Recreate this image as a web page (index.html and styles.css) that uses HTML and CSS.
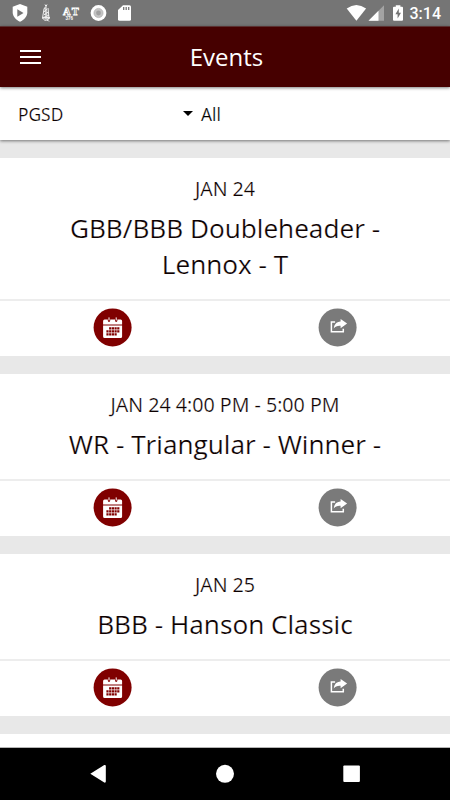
FILE: index.html
```html
<!DOCTYPE html>
<html lang="en">
<head>
  <meta charset="UTF-8" />
  <meta name="viewport" content="width=device-width, initial-scale=1" />
  <title>Events</title>
  <link rel="stylesheet" href="styles.css">
</head>
<body>

  <!-- Shared icons -->
  <svg class="sprite" width="0" height="0">
    <symbol id="calendar" viewBox="0 0 38 38">
      <path fill="#fff" d="M9.500 16V12.500q0-1.500 1.500-1.500h3.200v1.200q0 1.300 1.200 1.300t1.200-1.300V11h4.800v1.200q0 1.300 1.200 1.300t1.200-1.300V11H27q1.500 0 1.500 1.500V16zM9.500 17.200h19V28q0 1.500-1.500 1.500H11q-1.500 0-1.500-1.500z" />
      <path stroke="#fff" stroke-width="1" d="M15.400 9v3M22.600 9v3" />
      <g stroke="#800000" stroke-width="2.200" stroke-dasharray="2.200 .5">
        <path d="M15.500 20h10.400M12.800 23h13.100M12.800 26h10.400" />
      </g>
    </symbol>
    <symbol id="share" viewBox="0 0 38 38">
      <path fill="none" stroke="#fff" stroke-width="1.500" d="M16.500 13.700h-3.700v9.700h11.900v-3" />
      <path fill="#fff" d="M22 10.500l6.500 4.700-6.500 4.600v-2.400c-3.300-.2-5.300.6-6.800 2.800.3-4.100 2.400-6.800 6.800-7.100z" />
    </symbol>
  </svg>

  <div class="status-bar">
    <svg class="notifications" width="140" height="26" viewBox="0 0 140 26">
      <path fill="#fff" d="M20 4l7.300 2.700v5.600c0 4.200-3 7.600-7.300 9.500-4.300-1.900-7.300-5.300-7.300-9.500V6.700z" />
      <path fill="#757575" d="M17.300 9.300v7.400l6.200-3.700z" />
      <g fill="none" stroke="#eee" stroke-width="1">
        <path d="M45 4.500l1 2 1-2M46 6.500l-2 2 3 1-3 2 4 1-4 2 5 1-6 2 7 0-3 2 2 2M44 9l-1.500 9 3 3M48 8l1 10-2 3M42 18h8M46 7v14" />
      </g>
      <text class="logo-text" x="63" y="15">AT</text>
      <text class="logo-number" x="65.500" y="20">376</text>
      <circle cx="98.500" cy="13" r="7.900" fill="#fff" />
      <circle cx="98.500" cy="13" r="4.600" fill="#c4c4c4" stroke="#aaa" stroke-width=".6" />
      <circle cx="98.500" cy="13" r="2.400" fill="#a0a0a0" />
      <path fill="#fff" d="M123 5.200h6.500q1.500 0 1.500 1.500v12.500q0 1.600-1.500 1.600h-10q-1.500 0-1.500-1.600V10z" />
      <path stroke="#757575" stroke-width="1.300" d="M123.700 7v3M126.200 7v3M128.700 7v3" />
    </svg>
    <div class="system">
      <svg width="60" height="26" viewBox="345 0 60 26">
        <path fill="#fff" d="M346.700 8.500q9.700-7 19.400 0l-9.700 12.300z" />
        <path fill="#a3a3a3" d="M384 5.300v15.500h-15.500z" />
        <path fill="#fff" d="M378.500 10.800v10h-10z" />
        <path fill="#fff" d="M395.800 5.200h4.600v1.500h1.600q1 0 1 1v12q0 1.100-1 1.100h-8q-1 0-1-1.100v-12q0-1 1-1h1.800z" />
        <path fill="#757575" d="M398.800 8.500l-3.400 5.700h2.200v4.300l3.400-5.800h-2.200z" />
      </svg>
      <span class="clock">3:14</span>
    </div>
  </div>

  <header class="app-bar">
    <div class="menu"><i></i><i></i><i></i></div>
    <h1>Events</h1>
  </header>

  <div class="filters">
    <span class="school">PGSD</span>
    <span class="caret"></span>
    <span class="category">All</span>
  </div>

  <main class="events">
    <section class="card">
      <div class="info">
        <p class="date">JAN 24</p>
        <h2>GBB/BBB Doubleheader -<br>Lennox - T</h2>
      </div>
      <div class="actions">
        <span class="action add"><svg><use href="#calendar" /></svg></span>
        <span class="action share"><svg><use href="#share" /></svg></span>
      </div>
    </section>

    <section class="card">
      <div class="info">
        <p class="date">JAN 24 4:00 PM - 5:00 PM</p>
        <h2>WR - Triangular - Winner -</h2>
      </div>
      <div class="actions">
        <span class="action add"><svg><use href="#calendar" /></svg></span>
        <span class="action share"><svg><use href="#share" /></svg></span>
      </div>
    </section>

    <section class="card">
      <div class="info">
        <p class="date">JAN 25</p>
        <h2>BBB - Hanson Classic</h2>
      </div>
      <div class="actions">
        <span class="action add"><svg><use href="#calendar" /></svg></span>
        <span class="action share"><svg><use href="#share" /></svg></span>
      </div>
    </section>

    <section class="card next"></section>
  </main>

  <nav class="nav-bar">
    <svg width="450" height="52" viewBox="0 0 450 52" fill="#fff">
      <path d="M90.300 25.700L104.300 17q1.500-.5 1.500 1v15.500q0 1.500-1.500 1z" />
      <circle cx="225" cy="25.800" r="9" />
      <rect x="343.300" y="17.400" width="16.600" height="16.600" rx="1" />
    </svg>
  </nav>

</body>
</html>
```

FILE: styles.css
```css
* {
  margin: 0;
  padding: 0;
  box-sizing: border-box;
}
body {
  width: 450px;
  height: 800px;
  display: flex;
  flex-direction: column;
  overflow: hidden;
  background: #e8e8e8;
  color: #0c0000;
  font-family: "Open Sans", "Noto Sans", sans-serif;
}
svg {
  display: block;
}
.sprite {
  display: none;
}

/* Android status bar */
.status-bar {
  height: 26px;
  flex: none;
  display: flex;
  justify-content: space-between;
  background: #757575;
}
.system {
  display: flex;
  padding-right: 9px;
}
.clock {
  margin-left: 5px;
  color: #fff;
  font: 500 16px/28px Roboto, sans-serif;
}
.logo-text {
  font: bold 10.500px "Liberation Serif", serif;
  letter-spacing: 2px;
  fill: #666;
  stroke: #fff;
  stroke-width: .8px;
}
.logo-number {
  font: bold 4.500px "Liberation Sans", sans-serif;
  fill: #fff;
}

/* App header */
.app-bar {
  height: 61px;
  flex: none;
  display: grid;
  grid-template-columns: 60px 1fr 57px;
  align-items: center;
  padding-bottom: 1px;
  background: #460000;
  border-top: 1px solid #5a3030;
  color: #fff;
  box-shadow: 0 1px 3px rgba(0, 0, 0, .5);
  z-index: 1;
}
.menu {
  display: flex;
  flex-direction: column;
  gap: 4px;
  padding-left: 20px;
}
.menu i {
  width: 21px;
  height: 2px;
  background: #fff;
}
h1 {
  font-size: 24px;
  font-weight: 400;
  text-align: center;
}

/* Filter row */
.filters {
  height: 53px;
  flex: none;
  display: flex;
  align-items: center;
  padding: 0 18px;
  background: #fff;
  font-size: 17.400px;
  -webkit-text-stroke: .15px #fff;
  box-shadow: 0 1px 3px rgba(0, 0, 0, .5);
}
.school {
  width: 165px;
}
.caret {
  border: 5.500px solid transparent;
  border-top-color: #000;
  border-bottom: 0;
  margin-right: 8px;
}
.category {
  color: #000;
}

/* Event list */
.events {
  flex: 1;
  min-height: 0;
  display: flex;
  flex-direction: column;
  gap: 17.500px;
  padding-top: 17.500px;
  overflow: hidden;
}
.card {
  flex: none;
  background: #fff;
  text-align: center;
}
.info {
  padding: 17.500px 0 16.500px;
}
.date {
  font-size: 19.700px;
  -webkit-text-stroke: .2px #fff;
  line-height: 27px;
  margin-bottom: 8px;
}
h2 {
  font-size: 26.200px;
  font-weight: 400;
  -webkit-text-stroke: .2px #fff;
  line-height: 36px;
}
.actions {
  height: 57.500px;
  display: grid;
  grid-template-columns: 1fr 1fr;
  place-items: center;
  border-top: 2px solid #ededed;
}
.action {
  width: 38px;
  height: 38px;
  border-radius: 50%;
  transform: translate(-.4px, -.6px);
}
.action svg {
  width: 38px;
  height: 38px;
}
.add {
  background: #800000;
}
.share {
  background: #7a7a7a;
}
.next {
  height: 60px;
}

/* Android navigation bar */
.nav-bar {
  height: 53px;
  flex: none;
  background: #000;
  border-top: 1px solid #b4b4b4;
}
```
